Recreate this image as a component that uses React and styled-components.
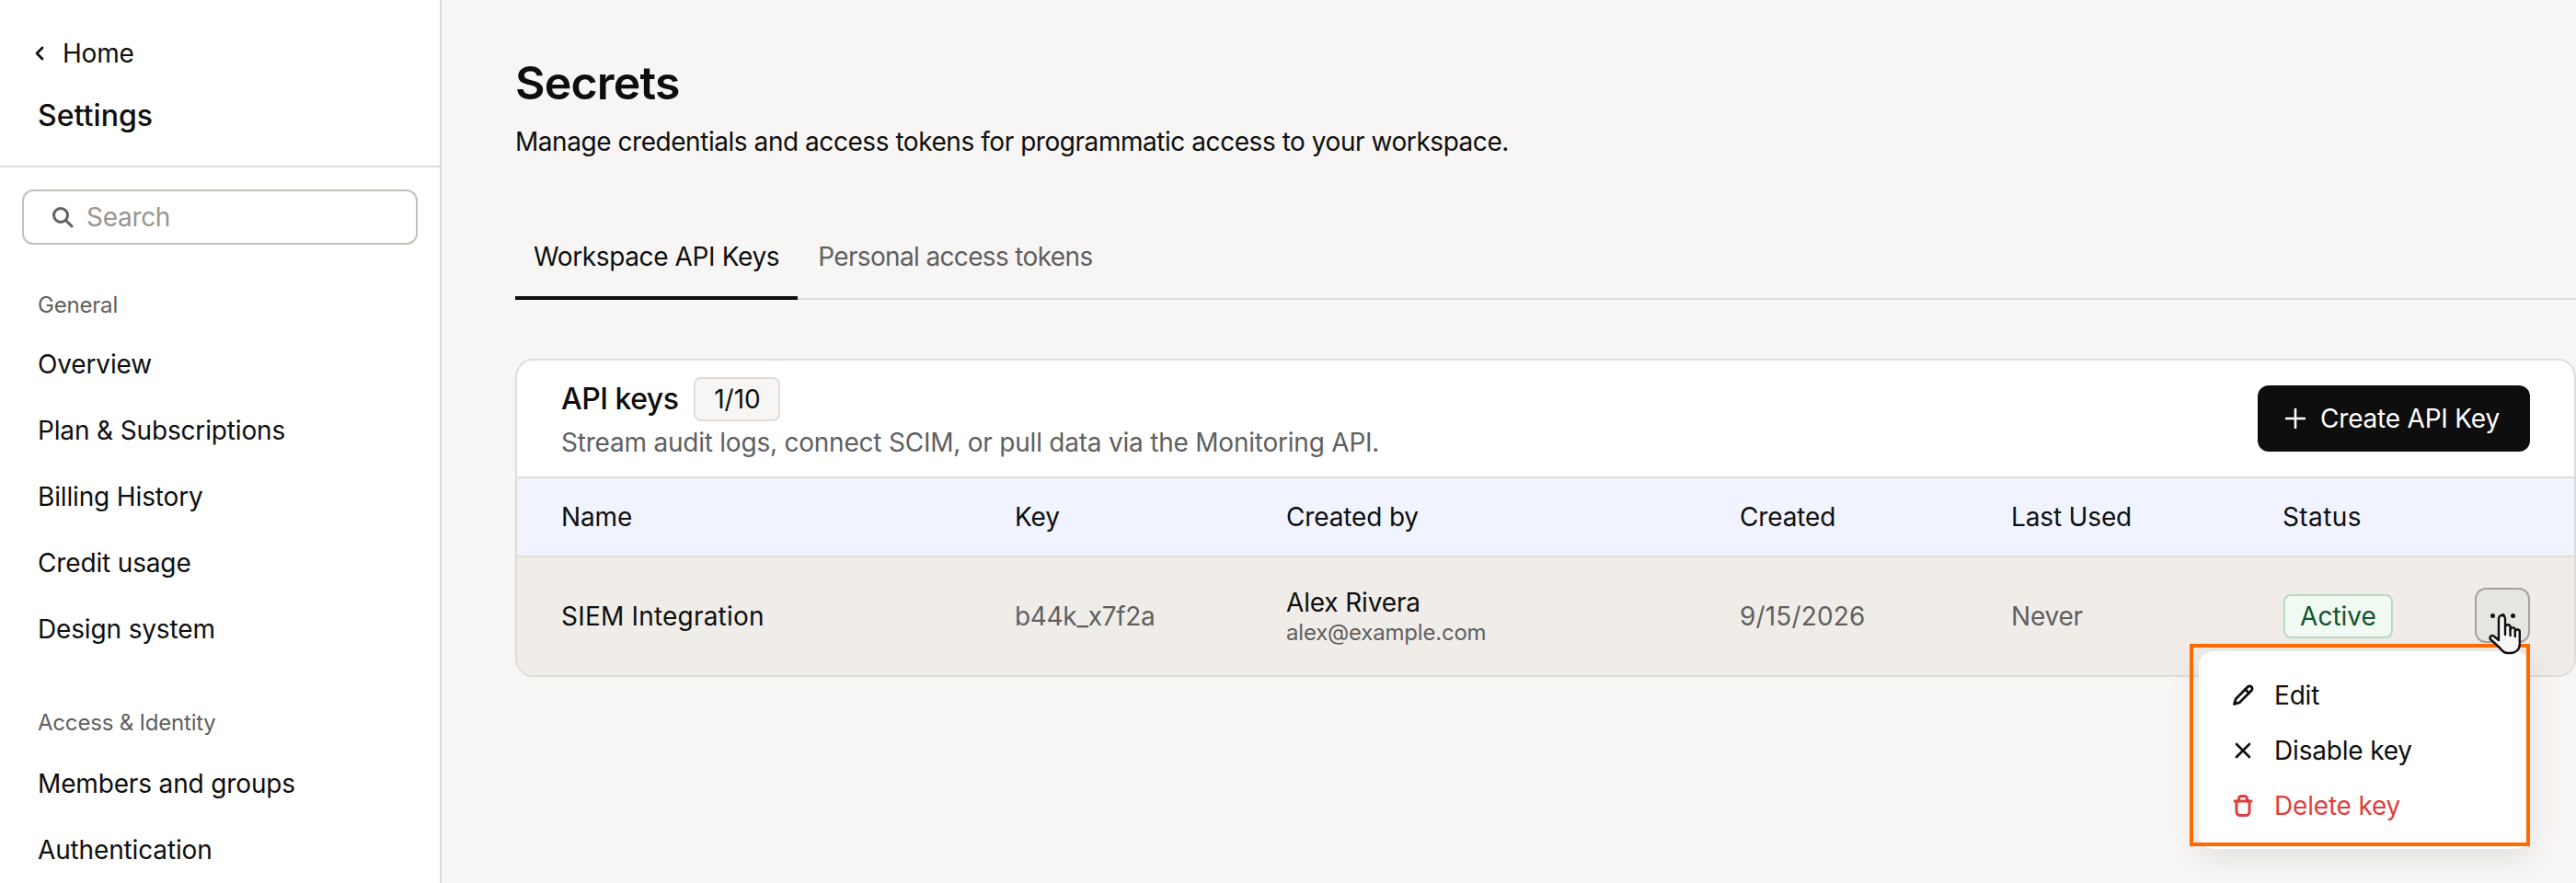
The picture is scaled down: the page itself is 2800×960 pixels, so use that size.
import React from "react"
import styled, { createGlobalStyle } from "styled-components"

const GlobalStyle = createGlobalStyle`
    html, body {
        margin: 0;
        padding: 0;
        background: #f7f6f4;
    }
    * {
        box-sizing: border-box;
    }
`

const Page = styled.div`
    display: flex;
    width: 2800px;
    height: 960px;
    overflow: hidden;
    font-family: Inter, "Liberation Sans", sans-serif;
    font-size: 28px;
    color: #0e0e0e;
    background: #f7f6f4;
`

const Sidebar = styled.aside`
    flex: 0 0 480px;
    height: 960px;
    background: #fff;
    border-right: 2px solid #e0dcd7;
    overflow: hidden;
`

const SideHead = styled.div`
    height: 182px;
    padding: 40px 0 0 38px;
    border-bottom: 2px solid #e0dcd7;
`

const HomeLink = styled.div`
    display: flex;
    align-items: center;
    gap: 20px;
    height: 36px;
    letter-spacing: -0.2px;
`

const SideTitle = styled.div`
    margin: 30px 0 0 3px;
    font-size: 32px;
    line-height: 40px;
    font-weight: 500;
    letter-spacing: 0.05px;
`

const SearchBox = styled.div`
    display: flex;
    align-items: center;
    gap: 14px;
    width: 430px;
    height: 60px;
    margin: 24px 0 0 24px;
    padding-left: 30px;
    border: 2px solid #c5c0ba;
    border-radius: 12px;
    color: #9a948e;
    letter-spacing: -0.3px;
`

const Section = styled.div`
    margin-top: ${props => props.$top}px;
`

const SectionLabel = styled.div`
    height: 36px;
    margin-bottom: ${props => props.$gap}px;
    padding-left: 41px;
    font-size: 24px;
    line-height: 36px;
    color: #5f5f5f;
    letter-spacing: -0.2px;
`

const NavItem = styled.div`
    display: flex;
    align-items: center;
    height: 72px;
    padding-left: 41px;
    letter-spacing: -0.15px;
`

const Main = styled.main`
    flex: 1;
    min-width: 0;
    padding-top: 61px;
    padding-left: 80px;
`

const Title = styled.h1`
    margin: 0;
    font-size: 50px;
    line-height: 58px;
    font-weight: 600;
    letter-spacing: -0.8px;
`

const Subtitle = styled.p`
    margin: 17px 0 0;
    line-height: 36px;
    letter-spacing: -0.45px;
`

const Tabs = styled.div`
    display: flex;
    height: 96px;
    margin-top: 58px;
    border-bottom: 2px solid #e0dcd7;
`

const Tab = styled.div`
    display: flex;
    align-items: center;
    height: 96px;
    padding: 11px 20px 6px;
    margin-right: 2px;
    border-bottom: 4px solid ${props => (props.$active ? "#0e0e0e" : "transparent")};
    color: ${props => (props.$active ? "#0e0e0e" : "#5f5f5f")};
    letter-spacing: ${props => (props.$active ? "-0.38px" : "-0.65px")};
`

const Card = styled.section`
    position: relative;
    margin-top: 64px;
    border: 2px solid #e0dcd7;
    border-radius: 20px;
`

const CardHead = styled.div`
    display: flex;
    justify-content: space-between;
    align-items: center;
    height: 128px;
    padding: 0 48px;
    background: #fff;
    border-bottom: 2px solid #e0dcd7;
    border-radius: 18px 18px 0 0;
`

const CardTitleRow = styled.div`
    display: flex;
    align-items: center;
    gap: 17px;
    height: 48px;
`

const CardTitle = styled.div`
    font-size: 32px;
    font-weight: 500;
    letter-spacing: -0.5px;
`

const CountChip = styled.div`
    display: flex;
    align-items: center;
    justify-content: center;
    width: 94px;
    height: 48px;
    border: 2px solid #e0dcd7;
    border-radius: 8px;
    background: #f7f6f4;
`

const CardDesc = styled.div`
    margin-top: 3px;
    line-height: 40px;
    color: #5f5f5f;
    letter-spacing: -0.22px;
`

const CreateButton = styled.button`
    display: flex;
    align-items: center;
    gap: 16px;
    width: 296px;
    height: 72px;
    padding: 0 0 0 30px;
    border: none;
    border-radius: 12px;
    background: #0e0e0e;
    color: #fff;
    font: inherit;
    letter-spacing: -0.2px;
`

const Grid = styled.div`
    display: grid;
    grid-template-columns: 493px 295px 493px 295px 295px 1fr;
    align-items: center;
    padding: 0 48px;
`

const TableHead = styled(Grid)`
    height: 86px;
    background: #f1f3fe;
    border-bottom: 2px solid #e0dcd7;
`

const TableRow = styled(Grid)`
    height: 128px;
    background: #f0ede8;
    border-radius: 0 0 18px 18px;
`

const HeadCell = styled.div`
    letter-spacing: ${props => (props.$wide ? "0.4px" : "-0.15px")};
`

const MutedCell = styled.div`
    color: #5f5f5f;
    letter-spacing: ${props => props.$spacing};
`

const NameCell = styled.div`
    letter-spacing: 0.2px;
`

const UserName = styled.div`
    margin-top: 2px;
    line-height: 34px;
    letter-spacing: -0.15px;
`

const UserMail = styled.div`
    font-size: 24px;
    line-height: 32px;
    color: #5f5f5f;
    letter-spacing: -0.2px;
`

const StatusCell = styled.div`
    display: flex;
    justify-content: space-between;
    align-items: center;
`

const Badge = styled.div`
    display: flex;
    align-items: center;
    justify-content: center;
    width: 119px;
    height: 48px;
    margin-left: 1px;
    border: 2px solid #b8dcc0;
    border-radius: 8px;
    background: #f0faf3;
    color: #14532d;
`

const ActionButton = styled.button`
    display: flex;
    justify-content: center;
    align-items: center;
    gap: 6px;
    width: 60px;
    height: 60px;
    margin-top: -2px;
    padding: 0;
    border: 2px solid #a8a29e;
    border-radius: 12px;
    background: #e7e5e0;
`

const Dot = styled.span`
    width: 5px;
    height: 5px;
    border-radius: 50%;
    background: #0e0e0e;
`

const Menu = styled.div`
    position: absolute;
    top: 316px;
    right: 48px;
    width: 360px;
    height: 215px;
    padding-top: 18px;
    border-radius: 16px;
    background: #fff;
    box-shadow: 0 8px 32px rgba(40, 30, 20, 0.1);
`

const MenuItem = styled.div`
    display: flex;
    align-items: center;
    gap: 22px;
    height: 60px;
    padding-left: 36px;
    color: ${props => (props.$danger ? "#e03e3e" : "#0e0e0e")};
    letter-spacing: -0.18px;
`

const IconSlot = styled.span`
    display: flex;
    justify-content: center;
    width: 24px;
`

const Highlight = styled.div`
    position: absolute;
    top: 308px;
    right: 48px;
    width: 370px;
    height: 220px;
    border: 4px solid #ff6a00;
    pointer-events: none;
`

const Cursor = styled.svg`
    position: absolute;
    top: 276px;
    right: 57px;
    width: 36px;
    height: 44px;
`

const stroke = { fill: "none", stroke: "currentColor", strokeLinecap: "round", strokeLinejoin: "round" }

const ChevronIcon = () => (
    <svg width="10" height="16" viewBox="0 0 10 16" {...stroke} strokeWidth="2.8">
        <path d="M8 2 2 8l6 6" />
    </svg>
)

const SearchIcon = () => (
    <svg width="24" height="24" viewBox="0 0 24 24" fill="none" stroke="#5f5f5f" strokeWidth="3" strokeLinecap="round">
        <circle cx="10" cy="10" r="7.5" />
        <path d="m15.5 15.5 6.5 6.5" />
    </svg>
)

const PlusIcon = () => (
    <svg width="22" height="22" viewBox="0 0 22 22" {...stroke} strokeWidth="2.6">
        <path d="M11 1v20M1 11h20" />
    </svg>
)

const PencilIcon = () => (
    <svg width="24" height="24" viewBox="0 0 24 24" {...stroke} strokeWidth="2.8">
        <path d="M21.200 6.800a2.800 2.800 0 0 0-4-4L4.600 15.400a2 2 0 0 0-.5.8L2.500 21.500l5.300-1.600a2 2 0 0 0 .8-.5z" />
        <path d="m14.500 5.500 4 4" />
    </svg>
)

const CloseIcon = () => (
    <svg width="20" height="20" viewBox="0 0 20 20" {...stroke} strokeWidth="2.6">
        <path d="M3 3l14 14M17 3 3 17" />
    </svg>
)

const TrashIcon = () => (
    <svg width="24" height="24" viewBox="0 0 24 24" {...stroke} strokeWidth="3">
        <path d="M3 7h18" />
        <path d="M7.500 7V4.500a3 3 0 0 1 3-3h3a3 3 0 0 1 3 3V7" />
        <path d="M5 7v11.500a4 4 0 0 0 4 4h6a4 4 0 0 0 4-4V7" />
    </svg>
)

const generalLinks = ["Overview", "Plan & Subscriptions", "Billing History", "Credit usage", "Design system"]
const accessLinks = ["Members and groups", "Authentication"]
const columns = ["Name", "Key", "Created by", "Created", "Last Used", "Status"]

const App = () => {
    return (
        <Page>
            <GlobalStyle />
            <Sidebar>
                <SideHead>
                    <HomeLink><ChevronIcon />Home</HomeLink>
                    <SideTitle>Settings</SideTitle>
                </SideHead>
                <SearchBox><SearchIcon />Search</SearchBox>
                <Section $top={48}>
                    <SectionLabel $gap={10}>General</SectionLabel>
                    {generalLinks.map(link => <NavItem key={link}>{link}</NavItem>)}
                </Section>
                <Section $top={48}>
                    <SectionLabel $gap={12}>Access &amp; Identity</SectionLabel>
                    {accessLinks.map(link => <NavItem key={link}>{link}</NavItem>)}
                </Section>
            </Sidebar>
            <Main>
                <Title>Secrets</Title>
                <Subtitle>Manage credentials and access tokens for programmatic access to your workspace.</Subtitle>
                <Tabs>
                    <Tab $active>Workspace API Keys</Tab>
                    <Tab>Personal access tokens</Tab>
                </Tabs>
                <Card>
                    <CardHead>
                        <div>
                            <CardTitleRow>
                                <CardTitle>API keys</CardTitle>
                                <CountChip>1/10</CountChip>
                            </CardTitleRow>
                            <CardDesc>Stream audit logs, connect SCIM, or pull data via the Monitoring API.</CardDesc>
                        </div>
                        <CreateButton><PlusIcon />Create API Key</CreateButton>
                    </CardHead>
                    <TableHead>
                        {columns.map(col => <HeadCell key={col} $wide={col === "Status"}>{col}</HeadCell>)}
                    </TableHead>
                    <TableRow>
                        <NameCell>SIEM Integration</NameCell>
                        <MutedCell $spacing="-0.35px">b44k_x7f2a</MutedCell>
                        <div>
                            <UserName>Alex Rivera</UserName>
                            <UserMail>alex@example.com</UserMail>
                        </div>
                        <MutedCell $spacing="0.15px">9/15/2026</MutedCell>
                        <MutedCell $spacing="-0.2px">Never</MutedCell>
                        <StatusCell>
                            <Badge>Active</Badge>
                            <ActionButton><Dot /><Dot /><Dot /></ActionButton>
                        </StatusCell>
                    </TableRow>
                    <Menu>
                        <MenuItem><IconSlot><PencilIcon /></IconSlot>Edit</MenuItem>
                        <MenuItem><IconSlot><CloseIcon /></IconSlot>Disable key</MenuItem>
                        <MenuItem $danger><IconSlot><TrashIcon /></IconSlot>Delete key</MenuItem>
                    </Menu>
                    <Highlight />
                    <Cursor viewBox="0 0 36 44" fill="#f6f6f6" stroke="#0e0e0e" strokeWidth="2.4" strokeLinejoin="round" strokeLinecap="round">
                        <path d="M11 25V4.500a3.500 3.500 0 0 1 7 0V14a2.800 2.800 0 0 1 5.600 0v3a2.600 2.600 0 0 1 5.200 0v2a2.500 2.500 0 0 1 5 0v13c0 6-4 10-10 10h-3c-4 0-6-2-8-5L2 27c-1.500-2.500 1-5 3.500-3.500L11 28z" />
                        <path d="M18 14v8M23.600 17v6M28.800 19v5" />
                    </Cursor>
                </Card>
            </Main>
        </Page>
    )
}

export default App
